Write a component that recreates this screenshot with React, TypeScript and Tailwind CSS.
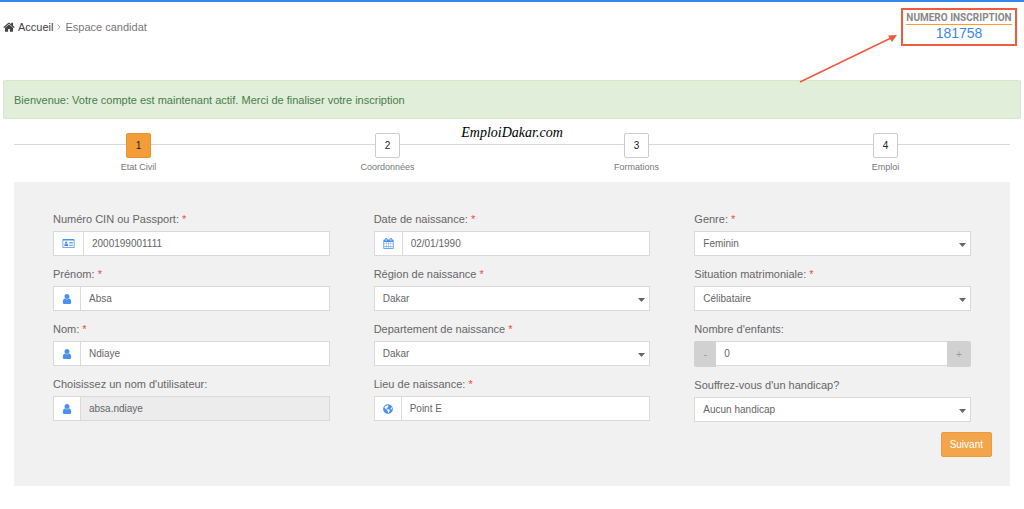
import React, { useState } from "react";
import { FaGlobeAmericas } from "react-icons/fa";

interface Field {
  id: string;
  label: string;
  required?: boolean;
}

const steps = ["Etat Civil", "Coordonnées", "Formations", "Emploi"];

function HomeIcon() {
  return (
    <svg viewBox="40 200 1712 1350" className="h-[10px] w-3" fill="currentColor">
      <path d="M1472 992v480q0 26-19 45t-45 19h-384v-384h-256v384h-384q-26 0-45-19t-19-45v-480q0-1 .5-3t.5-3l575-474 575 474q1 2 1 6zm223-69l-62 74q-8 9-21 11h-3q-13 0-21-7l-692-577-692 577q-12 8-24 7-13-2-21-11l-62-74q-8-10-7-23.5t11-21.5l719-599q32-26 76-26t76 26l244 204v-195q0-14 9-23t23-9h192q14 0 23 9t9 23v408l219 182q10 8 11 21.5t-7 23.5z" />
    </svg>
  );
}

function UserIcon() {
  return (
    <svg viewBox="256 128 1280 1536" className="size-2.5" fill="currentColor">
      <path d="M1536 1399q0 109-62.5 187t-150.5 78h-854q-88 0-150.5-78t-62.5-187q0-85 8.5-160.5t31.5-152 58.5-131 94-89 134.5-34.5q131 128 313 128t313-128q76 0 134.5 34.5t94 89 58.5 131 31.5 152 8.5 160.5zm-256-887q0 159-112.5 271.5t-271.5 112.5-271.5-112.5-112.5-271.5 112.5-271.5 271.5-112.5 271.5 112.5 112.5 271.5z" />
    </svg>
  );
}

function CalendarIcon() {
  return (
    <svg viewBox="64 0 1664 1792" className="size-[11px]" fill="currentColor">
      <path d="M192 1664h288v-288h-288v288zm352 0h320v-288h-320v288zm-352-352h288v-320h-288v320zm352 0h320v-320h-320v320zm-352-384h288v-288h-288v288zm736 736h320v-288h-320v288zm-384-736h320v-288h-320v288zm768 736h288v-288h-288v288zm-384-352h320v-320h-320v320zm-352-864v-288q0-13-9.5-22.5t-22.5-9.5h-64q-13 0-22.5 9.5t-9.5 22.5v288q0 13 9.5 22.5t22.5 9.5h64q13 0 22.5-9.5t9.5-22.5zm736 864h288v-320h-288v320zm-384-384h320v-288h-320v288zm384 0h288v-288h-288v288zm32-480v-288q0-13-9.5-22.5t-22.5-9.5h-64q-13 0-22.5 9.5t-9.5 22.5v288q0 13 9.5 22.5t22.5 9.5h64q13 0 22.5-9.5t9.5-22.5zm384-64v1280q0 52-38 90t-90 38h-1408q-52 0-90-38t-38-90v-1280q0-52 38-90t90-38h128v-96q0-66 47-113t113-47h64q66 0 113 47t47 113v96h384v-96q0-66 47-113t113-47h64q66 0 113 47t47 113v96h128q52 0 90 38t38 90z" />
    </svg>
  );
}

function CardIcon() {
  return (
    <svg viewBox="0 0 24 18" className="h-[9px] w-[13px]" fill="currentColor">
      <path
        fillRule="evenodd"
        d="M1.5 0h21Q24 0 24 1.5v15q0 1.5-1.5 1.5h-21Q0 18 0 16.5v-15Q0 0 1.5 0zM1.5 3v13.5h21V3z"
      />
      <circle cx="7.5" cy="7.2" r="2.3" />
      <path d="M3.5 13.8q0-4.3 2.2-4.8 1.8 1.3 3.6 0 2.2.5 2.2 4.8z" />
      <path d="M13.5 6h7v1.5h-7zM13.5 9h3v1.5h-3zM17.5 9h3v1.5h-3zM13.5 12h7v1.5h-7z" />
    </svg>
  );
}

function FieldLabel({ id, label, required }: Field) {
  return (
    <label htmlFor={id} className="mb-1 block text-[11px] leading-4">
      {label} {required && <span className="text-[#f4473a]">*</span>}
    </label>
  );
}

interface TextFieldProps extends Field {
  icon: React.ReactNode;
  value: string;
  disabled?: boolean;
}

function TextField({ icon, value, disabled, ...field }: TextFieldProps) {
  return (
    <div>
      <FieldLabel {...field} />
      <div className="flex h-[25px] border border-[#d9d9d9] bg-white">
        <span className="flex items-center border-r border-[#d9d9d9] px-2 text-[#4a90ee]">
          {icon}
        </span>
        <input
          id={field.id}
          type="text"
          defaultValue={value}
          disabled={disabled}
          className="min-w-0 flex-1 px-2 text-[10px] outline-none disabled:bg-[#ececec]"
        />
      </div>
    </div>
  );
}

interface SelectFieldProps extends Field {
  options: string[];
}

function SelectField({ options, ...field }: SelectFieldProps) {
  return (
    <div>
      <FieldLabel {...field} />
      <div className="relative">
        <select
          id={field.id}
          className="block h-[25px] w-full appearance-none border border-[#d9d9d9] bg-white px-2 text-[10px] outline-none"
        >
          {options.map((option) => (
            <option key={option}>{option}</option>
          ))}
        </select>
        <svg
          viewBox="0 0 7 4"
          className="pointer-events-none absolute top-3 right-[5px] h-1 w-[7px]"
          fill="#666"
        >
          <path d="M0 0h7L3.5 4z" />
        </svg>
      </div>
    </div>
  );
}

function ChildrenField() {
  const [count, setCount] = useState(0);
  return (
    <div>
      <FieldLabel id="enfants" label="Nombre d'enfants:" />
      <div className="flex h-[26px] items-start text-[10px]">
        <button
          type="button"
          aria-label="Moins"
          className="h-full w-[22px] rounded-l-xs bg-[#d1d1d1] text-[#999]"
          onClick={() => setCount(Math.max(0, count - 1))}
        >
          -
        </button>
        <input
          id="enfants"
          type="text"
          value={count}
          onChange={(e) => setCount(Number(e.target.value) || 0)}
          className="h-[25px] min-w-0 flex-1 border-y border-[#d9d9d9] bg-white px-2 outline-none"
        />
        <button
          type="button"
          aria-label="Plus"
          className="h-full w-6 rounded-r-xs bg-[#d1d1d1] text-[#999]"
          onClick={() => setCount(count + 1)}
        >
          +
        </button>
      </div>
    </div>
  );
}

function Header() {
  return (
    <header className="relative flex items-start justify-between border-t-2 border-[#3b86ea] pt-1.5 pr-[7px] pb-[34px] pl-[3px]">
      <nav className="flex items-center gap-1 pt-[11px] text-[11px] leading-4">
        <a href="#" className="flex items-center gap-[3px] text-[#444]">
          <HomeIcon />
          Accueil
        </a>
        <svg viewBox="0 0 4 6" className="h-1.5 w-1" fill="none" stroke="#aaa">
          <path d="M.5.5 3 3 .5 5.5" />
        </svg>
        <span className="text-[#777]">Espace candidat</span>
      </nav>
      <div className="flex h-[38px] w-[116px] flex-col items-center border-2 border-[#ee5a3c] text-center">
        <div className="mt-0.5 border-b border-[#ff9a2e] font-[Roboto,sans-serif] text-[10px] leading-3 font-bold whitespace-nowrap text-[#888]">
          NUMERO INSCRIPTION
        </div>
        <div className="text-[14px] leading-4 text-[#3b86ea]">181758</div>
      </div>
      <svg
        viewBox="0 0 100 50"
        className="absolute top-8 right-[125px] h-[50px] w-[100px]"
        fill="#ee5a3c"
      >
        <path d="M1 48 92 4" stroke="#ee5a3c" strokeWidth="1.5" />
        <path d="M98 1 93 8 89 1.5z" />
      </svg>
    </header>
  );
}

function Stepper() {
  return (
    <div className="relative mx-3.5 mt-3.5 grid grid-cols-4 pb-2 before:absolute before:top-[11px] before:right-0 before:left-0 before:border-t before:border-[#d9d9d9]">
      {steps.map((step, index) => (
        <div key={step} className="relative flex flex-col items-center">
          <button
            type="button"
            className={
              index === 0
                ? "size-[25px] rounded-xs border border-[#e8932f] bg-[#f29d38] text-[10px] text-[#222]"
                : "size-[25px] rounded-xs border border-[#ccc] bg-white text-[10px] text-[#222]"
            }
          >
            {index + 1}
          </button>
          <span className="mt-0.5 text-[9px] leading-[14px] text-[#777]">{step}</span>
        </div>
      ))}
      <div className="absolute -top-2 left-1/2 -translate-x-1/2 font-['Liberation_Serif',serif] text-[14px] leading-4 text-black italic">
        EmploiDakar.com
      </div>
    </div>
  );
}

function App() {
  return (
    <div className="bg-white pb-6 font-['Liberation_Sans',sans-serif] text-[#666]">
      <Header />
      <div className="mx-[3px] rounded-xs border border-[#d6e9c6] bg-[#e0eeda] px-2.5 pt-[11px] pb-2.5 text-[11px] leading-4 text-[#4a7c4b]">
        Bienvenue: Votre compte est maintenant actif. Merci de finaliser votre inscription
      </div>
      <Stepper />
      <form className="mx-3.5 bg-[#f1f1f1] pt-[29px] pr-[18px] pb-[29px] pl-[39px]">
        <div className="mr-[21px] grid grid-cols-3 gap-11">
          <div className="flex flex-col gap-2.5">
            <TextField id="cin" label="Numéro CIN ou Passport:" required icon={<CardIcon />} value="2000199001111" />
            <TextField id="prenom" label="Prénom:" required icon={<UserIcon />} value="Absa" />
            <TextField id="nom" label="Nom:" required icon={<UserIcon />} value="Ndiaye" />
            <TextField id="login" label="Choisissez un nom d'utilisateur:" icon={<UserIcon />} value="absa.ndiaye" disabled />
          </div>
          <div className="flex flex-col gap-2.5">
            <TextField id="naissance" label="Date de naissance:" required icon={<CalendarIcon />} value="02/01/1990" />
            <SelectField id="region" label="Région de naissance" required options={["Dakar"]} />
            <SelectField id="departement" label="Departement de naissance" required options={["Dakar"]} />
            <TextField id="lieu" label="Lieu de naissance:" required icon={<FaGlobeAmericas size={10} />} value="Point E" />
          </div>
          <div className="flex flex-col gap-2.5">
            <SelectField id="genre" label="Genre:" required options={["Feminin"]} />
            <SelectField id="situation" label="Situation matrimoniale:" required options={["Célibataire"]} />
            <ChildrenField />
            <SelectField id="handicap" label="Souffrez-vous d'un handicap?" options={["Aucun handicap"]} />
          </div>
        </div>
        <div className="mt-2.5 flex justify-end">
          <button
            type="submit"
            className="h-[25px] rounded-xs border border-[#ec9a3c] bg-[#f3a54b] px-2 text-[10px] text-white"
          >
            Suivant
          </button>
        </div>
      </form>
    </div>
  );
}

export default App;
